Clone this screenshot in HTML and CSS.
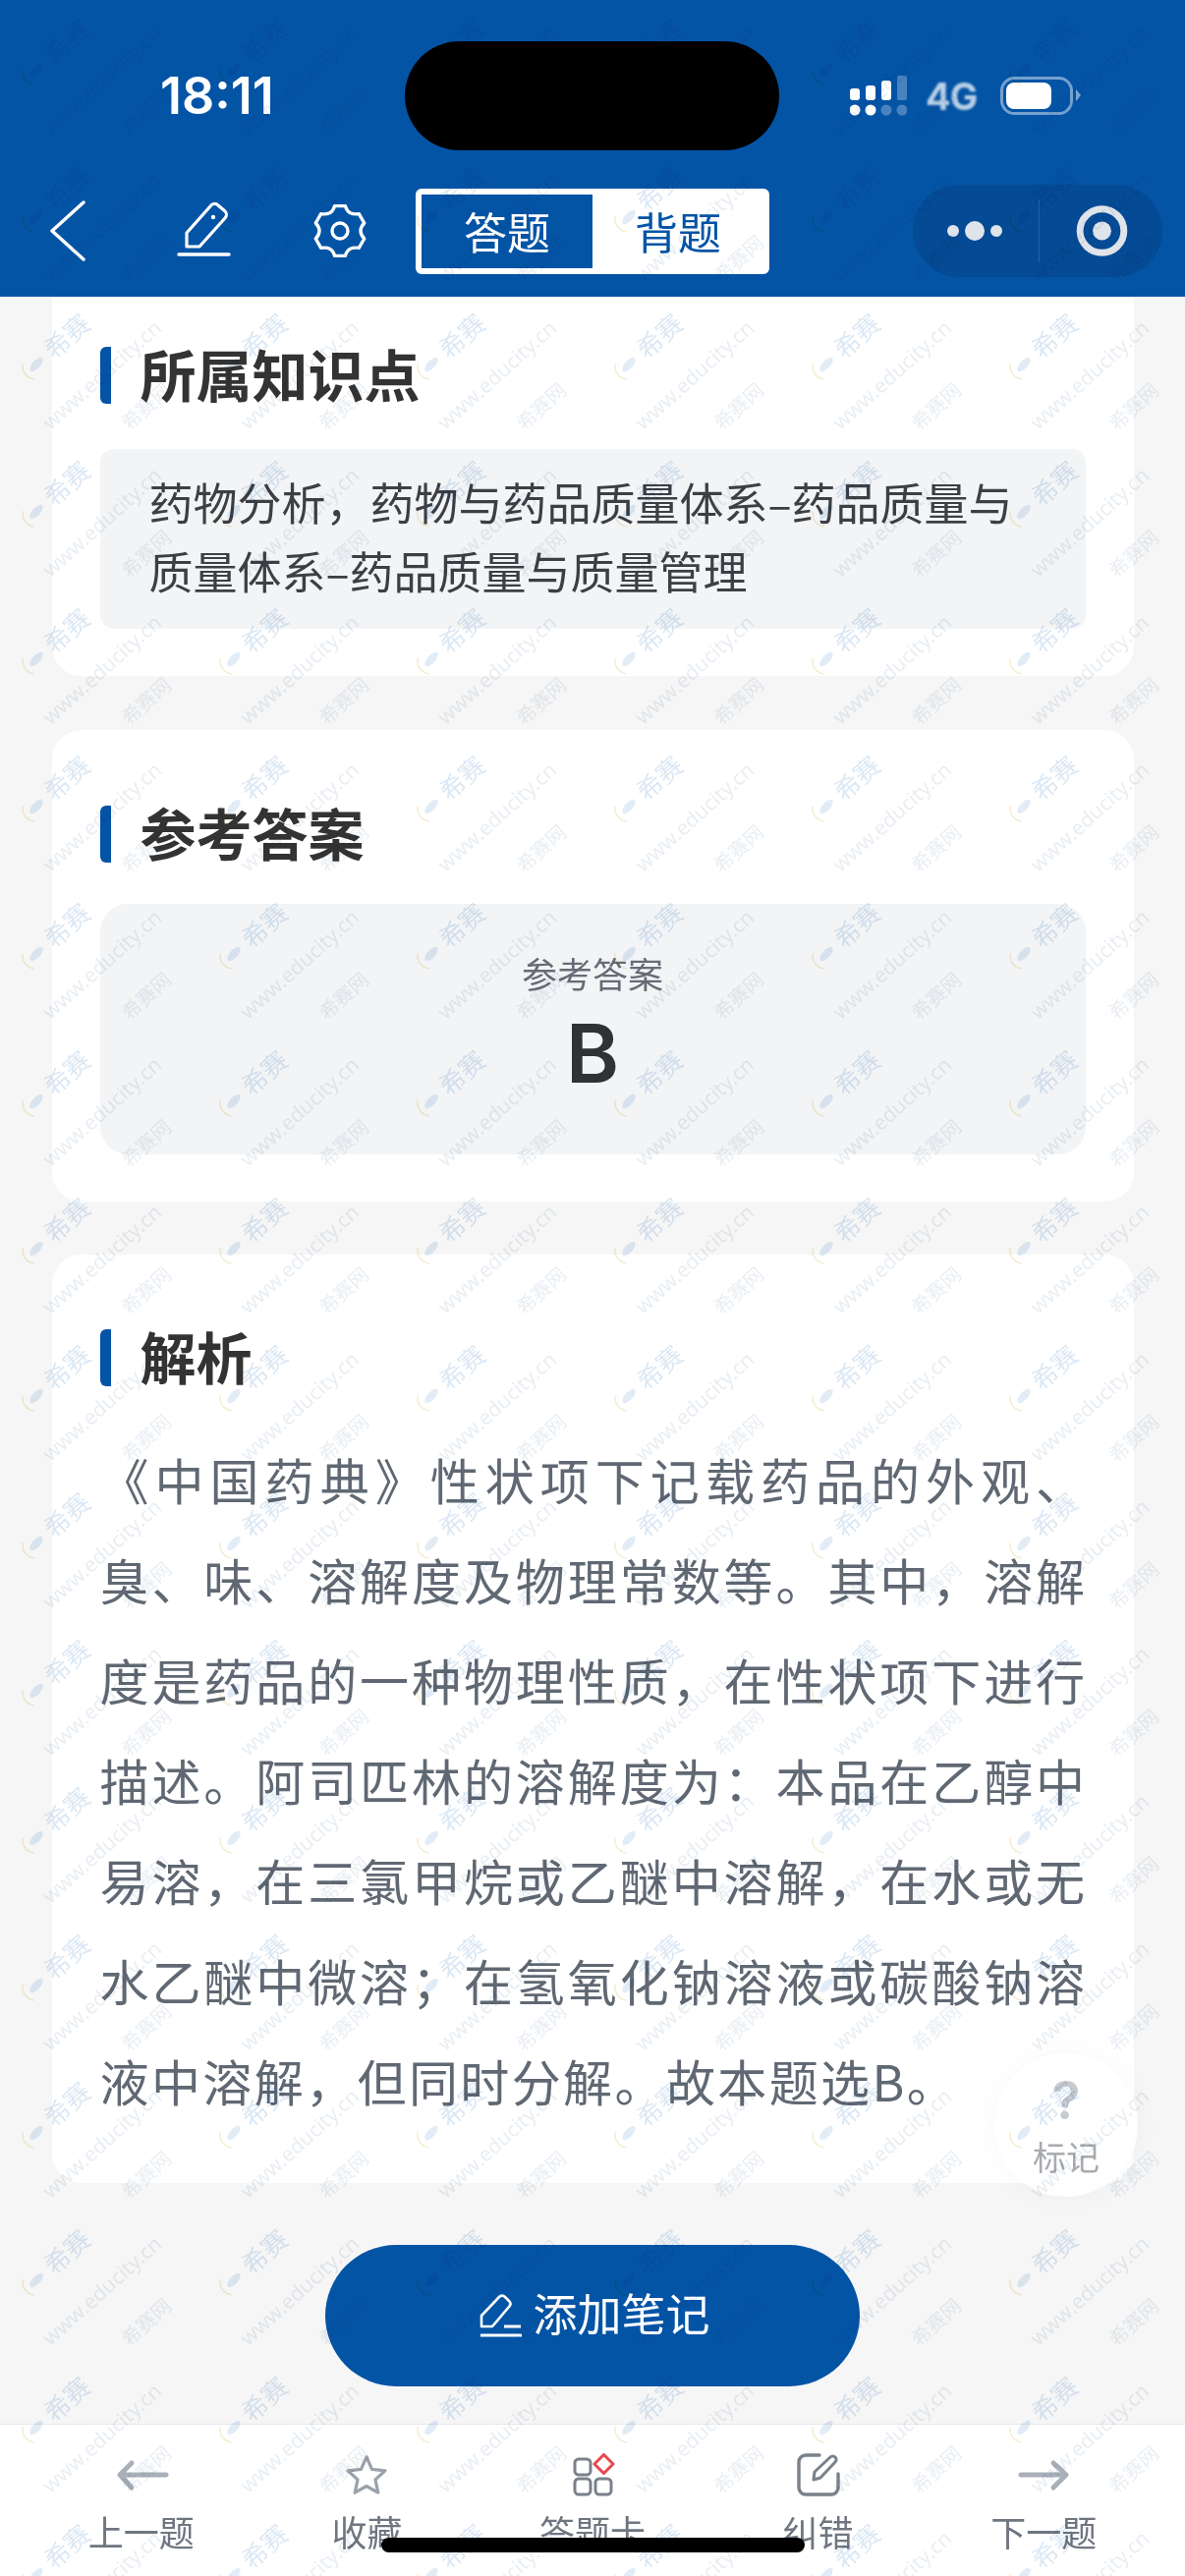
FILE: index.html
```html
<!DOCTYPE html>
<html lang="zh-CN">
<head>
    <meta charset="UTF-8">
    <meta name="viewport" content="width=device-width, initial-scale=1.0">
    <title>解析</title>
    <link rel="stylesheet" href="styles.css">
</head>
<body>
    <!-- Blue top area: status bar and nav -->
    <header class="top">
        <div class="status">
            <div class="time">18:11</div>
            <div class="island"></div>
            <div class="status-right">
                <svg class="signal" viewBox="0 0 58 42">
                    <rect x="0" y="13" width="10" height="12" rx="3" fill="#fff"/>
                    <rect x="16" y="10" width="10" height="15" rx="3" fill="#fff"/>
                    <rect x="32" y="5" width="10" height="20" rx="3" fill="#fff"/>
                    <rect x="48" y="0" width="10" height="25" rx="2" fill="#fff" opacity="0.28"/>
                    <circle cx="5" cy="35" r="5.5" fill="#fff"/>
                    <circle cx="21" cy="35" r="5.5" fill="#fff"/>
                    <circle cx="37" cy="35" r="5.5" fill="#fff" opacity="0.28"/>
                    <circle cx="53" cy="35" r="5.5" fill="#fff" opacity="0.28"/>
                </svg>
                <div class="net">4G</div>
                <svg class="battery" viewBox="0 0 84 40">
                    <rect x="1.5" y="1.5" width="71" height="36" rx="13" fill="none" stroke="#fff" stroke-opacity="0.45" stroke-width="3"/>
                    <rect x="6" y="6" width="46" height="27" rx="8" fill="#fff"/>
                    <path d="M77 13 l5 6 -5 6z" fill="#fff" opacity="0.5"/>
                </svg>
            </div>
        </div>
        <nav class="nav">
            <svg class="nav-back" viewBox="0 0 50 64">
                <path d="M40 4 L8 33 L40 62" fill="none" stroke="#fff" stroke-width="3.5" stroke-linecap="round" stroke-linejoin="round" transform="translate(0,-1)"/>
            </svg>
            <svg class="nav-pen" viewBox="0 0 56 60">
                <path d="M10 46 V32 L34 5 a5 5 0 0 1 8 -1 l7 6 a5 5 0 0 1 0 7 L23 46Z" fill="none" stroke="#fff" stroke-width="3.2" stroke-linejoin="round"/>
                <circle cx="37" cy="16" r="2.2" fill="#fff"/>
                <path d="M2 54 H53" stroke="#fff" stroke-width="3.5" stroke-linecap="round"/>
            </svg>
            <svg class="nav-gear" viewBox="-30 -30 60 60">
                <path d="M-5.4 -25.4 L5.4 -25.4 Q7 -20 10.5 -18.2 Q14 -16.5 19.3 -17.4 L24.7 -8 Q21 -4 21 0 Q21 4 24.7 8 L19.3 17.4 Q14 16.5 10.5 18.2 Q7 20 5.4 25.4 L-5.4 25.4 Q-7 20 -10.5 18.2 Q-14 16.5 -19.3 17.4 L-24.7 8 Q-21 4 -21 0 Q-21 -4 -24.7 -8 L-19.3 -17.4 Q-14 -16.5 -10.5 -18.2 Q-7 -20 -5.4 -25.4Z" fill="none" stroke="#fff" stroke-width="3.4" stroke-linejoin="round"/>
                <circle r="8" fill="none" stroke="#fff" stroke-width="3.4"/>
            </svg>
            <div class="seg">
                <div class="seg-item seg-on">答题</div>
                <div class="seg-item">背题</div>
            </div>
            <div class="capsule">
                <svg class="capsule-dots" viewBox="0 0 128 94">
                    <circle cx="41" cy="47" r="6" fill="#dfe3ea"/>
                    <circle cx="63" cy="47" r="10" fill="#dfe3ea"/>
                    <circle cx="85" cy="47" r="6" fill="#dfe3ea"/>
                </svg>
                <div class="capsule-line"></div>
                <svg class="capsule-ring" viewBox="0 0 126 94">
                    <circle cx="64" cy="47" r="22.5" fill="none" stroke="#dfe3ea" stroke-width="7"/>
                    <circle cx="64" cy="47" r="9.5" fill="#dfe3ea"/>
                </svg>
            </div>
        </nav>
    </header>

    <main class="content">
        <section class="card card-first">
            <h2 class="title">所属知识点</h2>
            <div class="point-box">药物分析，药物与药品质量体系–药品质量与质量体系–药品质量与质量管理</div>
        </section>

        <section class="card card-answer">
            <h2 class="title title-tight">参考答案</h2>
            <div class="answer-box">
                <div class="answer-label">参考答案</div>
                <div class="answer-value">B</div>
            </div>
        </section>

        <section class="card card-detail">
            <h2 class="title">解析</h2>
            <p class="detail">《中国药典》性状项下记载药品的外观、臭、味、溶解度及物理常数等。其中，溶解度是药品的一种物理性质，在性状项下进行描述。阿司匹林的溶解度为：本品在乙醇中易溶，在三氯甲烷或乙醚中溶解，在水或无水乙醚中微溶；在氢氧化钠溶液或碳酸钠溶液中溶解，但同时分解。故本题选B。</p>
        </section>

        <button class="note-btn">
            <svg class="note-icon" viewBox="0 0 44 44">
                <path d="M2 33 V22 L20 3 q3 -3 6 0 l4 4 q3 3 0 6 L13 33Z" fill="none" stroke="#fff" stroke-width="2.6" stroke-linejoin="round"/>
                <path d="M25 33 H42 M1 42 H43" stroke="#fff" stroke-width="3"/>
            </svg>
            <span class="note-text">添加笔记</span>
        </button>
    </main>

    <footer class="tabs">
        <div class="tab">
            <svg class="tab-icon" viewBox="0 0 60 44">
                <path d="M55 22 H8 M20 10 L8 22 L20 35" fill="none" stroke="#a9b0b9" stroke-width="5" stroke-linecap="round" stroke-linejoin="round"/>
            </svg>
            <div class="tab-label">上一题</div>
        </div>
        <div class="tab">
            <svg class="tab-icon" viewBox="0 0 60 44">
                <path transform="translate(9,2)" d="M21 2 L26.6 14.3 L40 15.8 L30 24.9 L32.8 38.2 L21 31.5 L9.2 38.2 L12 24.9 L2 15.8 L15.4 14.3Z" fill="none" stroke="#9aa1aa" stroke-width="3.2" stroke-linejoin="round"/>
            </svg>
            <div class="tab-label">收藏</div>
        </div>
        <div class="tab">
            <svg class="tab-icon" viewBox="0 0 60 44">
                <rect x="12" y="6" width="16" height="16" rx="4" fill="none" stroke="#7a818a" stroke-width="3"/>
                <rect x="12" y="26" width="16" height="16" rx="4" fill="none" stroke="#7a818a" stroke-width="3"/>
                <rect x="33" y="26" width="16" height="16" rx="4" fill="none" stroke="#7a818a" stroke-width="3"/>
                <path d="M41.5 1.5 L51 11 L41.5 20.5 L32 11Z" fill="none" stroke="#e5484d" stroke-width="3" stroke-linejoin="round"/>
            </svg>
            <div class="tab-label">答题卡</div>
        </div>
        <div class="tab">
            <svg class="tab-icon" viewBox="0 0 60 44">
                <path d="M31 2 H17 a7 7 0 0 0 -7 7 V35 a7 7 0 0 0 7 7 H43 a7 7 0 0 0 7 -7 V21" fill="none" stroke="#7a818a" stroke-width="3.4" stroke-linecap="round"/>
                <path d="M25 27 L26 19 L42 4 a3.5 3.5 0 0 1 5 0 a3.5 3.5 0 0 1 0 5 L32 25Z" fill="none" stroke="#7a818a" stroke-width="3" stroke-linejoin="round"/>
            </svg>
            <div class="tab-label">纠错</div>
        </div>
        <div class="tab">
            <svg class="tab-icon" viewBox="0 0 60 44">
                <path d="M7 22 H53 M40 10 L53 22 L40 35" fill="none" stroke="#a9b0b9" stroke-width="5" stroke-linecap="round" stroke-linejoin="round"/>
            </svg>
            <div class="tab-label">下一题</div>
        </div>
    </footer>

    <!-- Floating mark button -->
    <div class="mark">
        <div class="mark-q">?</div>
        <div class="mark-text">标记</div>
    </div>

    <div class="home-bar"></div>

    <!-- Repeating watermark over the whole page -->
    <svg class="watermark" width="1206" height="2622">
        <defs>
            <pattern id="wm" width="201" height="150" patternUnits="userSpaceOnUse">
                <text x="68" y="52" class="wm-logo" text-anchor="middle" transform="rotate(-42 68 42)">希赛</text>
                <text x="104" y="89" class="wm-url" text-anchor="middle" transform="rotate(-42 104 82)">www.educity.cn</text>
                <text x="149" y="121" class="wm-name" text-anchor="middle" transform="rotate(-42 149 114)">希赛网</text>
                <circle cx="36" cy="73" r="13" fill="none" stroke="#e6d38a" stroke-width="1.5" stroke-dasharray="22 60" opacity="0.4" transform="rotate(95 36 73)"/>
                <ellipse cx="37" cy="71" rx="9" ry="4" fill="#5a94cc" opacity="0.18" transform="rotate(-48 37 71)"/>
            </pattern>
        </defs>
        <rect width="1206" height="2622" fill="url(#wm)"/>
    </svg>
</body>
</html>
```

FILE: styles.css
```css
* {
    box-sizing: border-box;
}

body {
    position: relative;
    display: flex;
    flex-direction: column;
    width: 1206px;
    height: 2622px;
    margin: 0;
    overflow: hidden;
    background-color: #f6f6f6;
    color: #333;
    font-family: "Noto Sans CJK SC", "Noto Sans", sans-serif;
}

/* Top blue area */
.top {
    height: 302px;
    padding-top: 42px;
    background-color: #0454a6;
}

.status {
    display: flex;
    align-items: center;
    height: 111px;
}

.time {
    width: 412px;
    padding-left: 163px;
    color: #fff;
    font-family: Inter, sans-serif;
    font-size: 52px;
    font-weight: 600;
}

.island {
    width: 381px;
    height: 111px;
    border-radius: 56px;
    background-color: #000;
}

.status-right {
    display: flex;
    align-items: center;
    padding-left: 72px;
}

.signal {
    width: 58px;
    height: 42px;
}

.net {
    width: 95px;
    padding-left: 19px;
    color: rgba(255, 255, 255, 0.72);
    font-family: Inter, sans-serif;
    font-size: 38px;
    font-weight: 700;
    letter-spacing: -1px;
    filter: blur(1px);
}

.battery {
    width: 84px;
    height: 40px;
}

/* Nav row */
.nav {
    display: flex;
    align-items: center;
    height: 94px;
    margin-top: 35px;
    padding-left: 45px;
}

.nav-back {
    width: 50px;
    height: 64px;
    margin-right: 85px;
}

.nav-pen {
    width: 56px;
    height: 60px;
    margin-right: 80px;
}

.nav-gear {
    width: 60px;
    height: 60px;
    margin-right: 47px;
}

.seg {
    display: flex;
    width: 360px;
    height: 87px;
    border: 6px solid #fff;
    border-radius: 6px;
    background-color: #fff;
    color: #0454a6;
    font-size: 44px;
}

.seg-item {
    display: flex;
    flex: 1;
    align-items: center;
    justify-content: center;
}

.seg-on {
    background-color: #0454a6;
    color: #fff;
}

.capsule {
    display: flex;
    align-items: center;
    width: 254px;
    height: 94px;
    margin-left: 146px;
    border-radius: 47px;
    background-color: #044a94;
}

.capsule-dots {
    width: 128px;
    height: 94px;
}

.capsule-line {
    width: 1px;
    height: 64px;
    background-color: #1c62ac;
}

.capsule-ring {
    width: 125px;
    height: 94px;
}

/* Main scroll content */
.content {
    display: flex;
    flex: 1;
    flex-direction: column;
    align-items: center;
    padding: 0 52px;
}

.card {
    width: 1101px;
    padding: 77px 49px 48px;
    border-radius: 30px;
    background-color: #fff;
}

.card-first {
    padding-top: 51px;
    border-top-left-radius: 0;
    border-top-right-radius: 0;
}

.card-answer {
    margin-top: 55px;
}

.card-detail {
    margin-top: 54px;
    padding-top: 76px;
    padding-bottom: 51px;
}

.title {
    height: 58px;
    margin: 0 0 46px;
    padding-left: 41px;
    background: linear-gradient(#0454a6, #0454a6) 0 0 / 11px 100% no-repeat;
    border-radius: 6px 0 0 6px;
    font-size: 57px;
    font-weight: 700;
    line-height: 52px;
}

.title-tight {
    margin-bottom: 42px;
}

.point-box {
    height: 183px;
    padding: 19px 40px 0 50px;
    border-radius: 14px;
    background-color: #f3f4f6;
    color: #3c3f44;
    font-size: 45px;
    line-height: 70px;
}

.answer-box {
    height: 255px;
    padding-top: 45px;
    border-radius: 28px;
    background-color: #f3f4f6;
    text-align: center;
}

.answer-label {
    color: #666c75;
    font-size: 36px;
    line-height: 50px;
}

.answer-value {
    margin-top: 12px;
    color: #303236;
    font-family: Inter, sans-serif;
    font-size: 82px;
    font-weight: 600;
    line-height: 92px;
}

.detail {
    margin: -3px -2px 3px 0;
    color: #606873;
    font-size: 50px;
    letter-spacing: 2.4px;
    line-height: 102px;
    text-align: justify;
}

.note-btn {
    display: flex;
    align-items: center;
    justify-content: center;
    flex-shrink: 0;
    gap: 10px;
    width: 544px;
    height: 144px;
    margin-top: 63px;
    padding: 0 0 0 5px;
    border: none;
    border-radius: 72px;
    background-color: #0454a6;
    color: #fff;
    font-family: inherit;
    font-size: 45px;
}

.note-icon {
    width: 44px;
    height: 44px;
}

.note-text {
    margin-bottom: 8px;
}

/* Bottom tabs */
.tabs {
    display: flex;
    flex-shrink: 0;
    height: 155px;
    padding: 29px 29px 0;
    border-top: 1px solid #e6e8ec;
    background-color: #fff;
}

.tab {
    display: flex;
    flex: 1;
    flex-direction: column;
    align-items: center;
}

.tab-icon {
    width: 60px;
    height: 44px;
}

.tab-label {
    margin-top: 15px;
    color: #6f7680;
    font-size: 36px;
    line-height: 40px;
}

/* Things on top of the page */
.mark {
    position: absolute;
    top: 2090px;
    left: 1012px;
    width: 146px;
    height: 146px;
    border-radius: 50%;
    background-color: rgba(255, 255, 255, 0.85);
    box-shadow: 0 0 30px rgba(0, 0, 0, 0.03);
    text-align: center;
}

.mark-q {
    margin-top: 15px;
    color: #c8cbcf;
    font-family: Inter, sans-serif;
    font-size: 54px;
    font-weight: 600;
    line-height: 65px;
}

.mark-text {
    color: #a8abaf;
    font-size: 34px;
    line-height: 50px;
}

.home-bar {
    position: absolute;
    top: 2583px;
    left: 388px;
    width: 431px;
    height: 15px;
    border-radius: 8px;
    background-color: #000;
}

.watermark {
    position: absolute;
    top: 0;
    left: 0;
    pointer-events: none;
    mix-blend-mode: multiply;
    font-family: "Noto Sans CJK SC", sans-serif;
}

.wm-logo {
    fill: #5a94cc;
    font-size: 26px;
    opacity: 0.22;
}

.wm-url {
    fill: #6a8cae;
    font-family: "Noto Sans", sans-serif;
    font-size: 21px;
    opacity: 0.15;
}

.wm-name {
    fill: #6a8cae;
    font-size: 20px;
    opacity: 0.15;
}
```
